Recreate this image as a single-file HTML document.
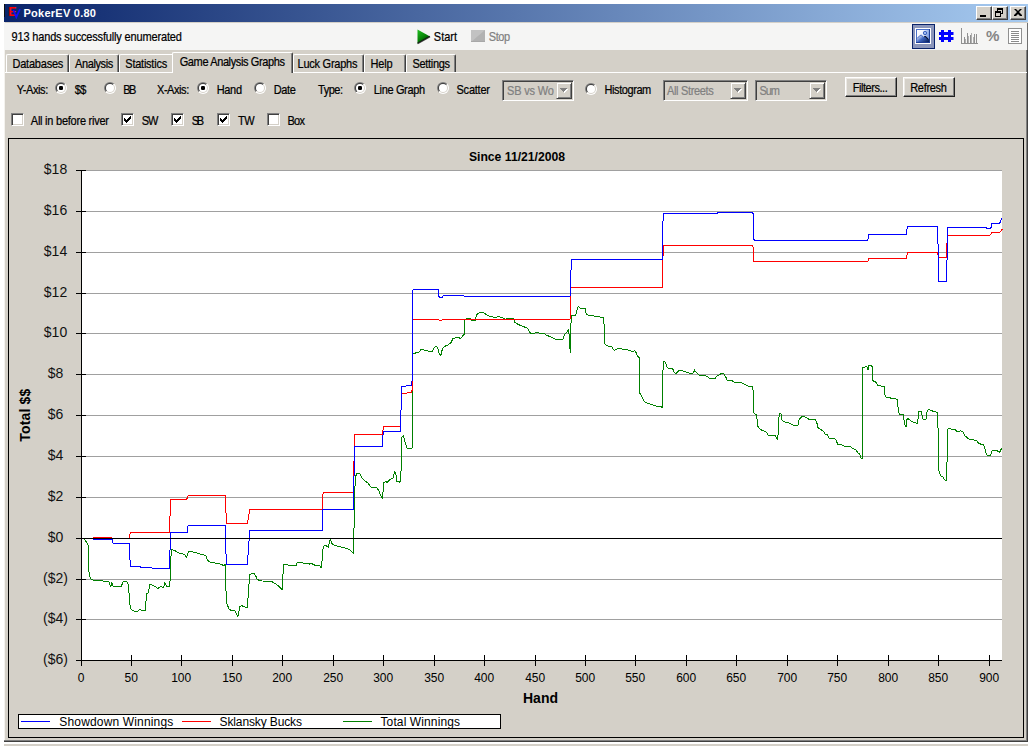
<!DOCTYPE html>
<html><head><meta charset="utf-8"><title>PokerEV 0.80</title>
<style>
html,body{margin:0;padding:0;background:#fff;}
body{width:1032px;height:746px;position:relative;overflow:hidden;font-family:"Liberation Sans",sans-serif;font-size:11px;color:#000;}
#win{position:absolute;left:4px;top:4px;width:1024px;height:738px;background:#d4d0c8;}
#botstrip{position:absolute;left:4px;top:744px;width:1024px;height:2px;background:#d4d0c8;}
#title{position:absolute;left:4px;top:4px;width:1024px;height:18px;background:linear-gradient(to right,#0a246a 0%,#a6caf0 100%);}
#title .t{position:absolute;left:19.5px;top:3px;color:#fff;font-weight:bold;font-size:11px;line-height:13px;white-space:nowrap;letter-spacing:0.25px;}
#tool{position:absolute;left:4px;top:23px;width:1023px;height:27px;background:#f5f5f4;}
.lbl{position:absolute;white-space:nowrap;font-size:11px;line-height:12px;-webkit-text-stroke:0.2px;transform:scaleY(1.12);transform-origin:0 10px;}
.tab{position:absolute;top:54px;height:19px;border-top:1px solid #fff;border-left:1px solid #fff;border-right:1px solid #404040;border-radius:2px 2px 0 0;box-sizing:border-box;box-shadow:inset -1px 0 0 #808080;}
.tab.sel{top:52px;height:21px;background:#d4d0c8;}
.radio{position:absolute;width:12px;height:12px;border-radius:50%;background:linear-gradient(135deg,#808080 0%,#808080 50%,#fff 50%,#fff 100%);}
.radio::before{content:"";position:absolute;left:1px;top:1px;width:10px;height:10px;border-radius:50%;background:linear-gradient(135deg,#404040 0%,#404040 50%,#d4d0c8 50%,#d4d0c8 100%);}
.radio::after{content:"";position:absolute;left:2px;top:2px;width:8px;height:8px;border-radius:50%;background:#fff;}
.radio i{position:absolute;left:4px;top:4px;width:4px;height:4px;border-radius:1.3px;background:#000;z-index:2;}
.cb{position:absolute;width:13px;height:13px;box-sizing:border-box;background:#fff;border:1px solid;border-color:#808080 #fff #fff #808080;box-shadow:inset 1px 1px 0 #404040,inset -1px -1px 0 #d4d0c8;}
.dd{position:absolute;height:21px;box-sizing:border-box;background:#d4d0c8;border:1px solid;border-color:#808080 #fff #fff #808080;box-shadow:inset 1px 1px 0 #404040,inset -1px -1px 0 #d4d0c8;}
.ddb{position:absolute;right:1px;top:1px;width:16px;height:17px;box-sizing:border-box;background:#d4d0c8;border:1px solid;border-color:#d4d0c8 #404040 #404040 #d4d0c8;box-shadow:inset 1px 1px 0 #fff,inset -1px -1px 0 #808080;z-index:0;}
.btn{position:absolute;height:20px;box-sizing:border-box;background:#d4d0c8;border:1px solid;border-color:#fff #202020 #202020 #fff;box-shadow:inset -1px -1px 0 #808080,inset 1px 1px 0 #ece9e4;}
#panel{position:absolute;left:8px;top:138px;width:1016px;height:600px;box-sizing:border-box;border:1px solid #000;background:#d4d0c8;}
#chart{position:absolute;left:0;top:0;font-family:"Liberation Sans",sans-serif;}
.capbtn{position:absolute;top:6px;width:16px;height:14px;box-sizing:border-box;background:#d4d0c8;border:1px solid;border-color:#fff #404040 #404040 #fff;box-shadow:inset -1px -1px 0 #808080;}
</style></head><body>
<div id="win"></div>
<div id="botstrip"></div>
<div style="position:absolute;left:4px;top:22px;width:1px;height:720px;background:#f4f2ee"></div>
<div style="position:absolute;left:1026px;top:50px;width:1px;height:692px;background:#808080"></div>
<div style="position:absolute;left:1027px;top:50px;width:1px;height:692px;background:#404040"></div>
<div style="position:absolute;left:1027px;top:23px;width:1px;height:27px;background:#707070"></div>
<div style="position:absolute;left:4px;top:740px;width:1023px;height:1px;background:#808080"></div>
<div style="position:absolute;left:4px;top:741px;width:1024px;height:1px;background:#404040"></div>
<div id="title"><span class="t">PokerEV 0.80</span></div>
<div id="tool"></div>
<div class="tab" style="left:6px;width:63px"></div>
<div class="tab" style="left:69px;width:50px"></div>
<div class="tab" style="left:119px;width:56px"></div>
<div class="tab" style="left:293px;width:71px"></div>
<div class="tab" style="left:364px;width:42px"></div>
<div class="tab" style="left:406px;width:50px"></div>
<div class="abs" style="position:absolute;left:5px;top:72px;width:1022px;height:1px;background:#fff"></div>
<div class="tab sel" style="left:172px;width:121px"></div>
<div class="btn" style="left:845px;top:77px;width:52px"></div>
<div class="btn" style="left:903px;top:77px;width:52px"></div>

<!-- title icon + caption buttons -->
<div style="position:absolute;left:4px;top:4px;width:1px;height:13px;background:#101010"></div>
<svg style="position:absolute;left:8px;top:6px" width="14" height="13" viewBox="0 0 14 13"><text x="0.3" y="9.6" font-family="Liberation Sans,sans-serif" font-size="12.5" font-weight="bold" fill="#ff0000">E</text><path d="M5.4 4L8.3 11.3L12 3" fill="none" stroke="#1010ff" stroke-width="1.7"/></svg>
<div class="capbtn" style="left:976px"><svg width="16" height="14" viewBox="0 0 16 14" style="position:absolute;left:-1px;top:-1px"><rect x="4" y="9" width="6" height="2" fill="#000"/></svg></div>
<div class="capbtn" style="left:992px"><svg width="16" height="14" viewBox="0 0 16 14" style="position:absolute;left:-1px;top:-1px"><path d="M5 2h6v6h-2v-1h1v-3h-4v1h-1z M3 5h6v6h-6z M4 7v3h4v-3z" fill="#000" fill-rule="evenodd"/></svg></div>
<div class="capbtn" style="left:1010px"><svg width="16" height="14" viewBox="0 0 16 14" style="position:absolute;left:-1px;top:-1px"><path d="M4 3h2l2 2l2-2h2l-3 3l3 3v1h-2l-2-2l-2 2h-2v-1l3-3z" fill="#000"/></svg></div>
<!-- toolbar icons -->
<svg style="position:absolute;left:416px;top:28px" width="16" height="17" viewBox="0 0 16 17"><defs><linearGradient id="gt" x1="0" y1="0" x2="0.6" y2="1"><stop offset="0" stop-color="#22c022"/><stop offset="0.55" stop-color="#0a8a0a"/><stop offset="1" stop-color="#003800"/></linearGradient></defs><path d="M1.5 1.5L14 8.5L1.5 15.5z" fill="url(#gt)"/><path d="M1.5 15.5L14 8.5" stroke="#101010" stroke-width="1.6" fill="none" opacity="0.8"/></svg>
<svg style="position:absolute;left:471px;top:30px" width="14" height="12" viewBox="0 0 14 12"><rect x="0" y="0" width="14" height="12" fill="#c2c2c2"/><path d="M0 12L14 0V12z" fill="#b2b2b2"/><rect x="0" y="11" width="14" height="1" fill="#a8a8a8"/></svg>
<div style="position:absolute;left:912px;top:24px;width:23px;height:25px;box-sizing:border-box;border:1px solid #0a246a;background:#8b96ba"></div>
<svg style="position:absolute;left:915px;top:28px" width="16" height="16" viewBox="0 0 16 16"><defs><linearGradient id="sky" x1="0" y1="0" x2="1" y2="0.3"><stop offset="0" stop-color="#ffffff"/><stop offset="0.55" stop-color="#f0f4ff"/><stop offset="1" stop-color="#7c9ce0"/></linearGradient><linearGradient id="mt" x1="0" y1="0.2" x2="1" y2="0.9"><stop offset="0" stop-color="#e8eefc"/><stop offset="0.45" stop-color="#3c64c0"/><stop offset="1" stop-color="#08205c"/></linearGradient></defs><rect x="0" y="0" width="16" height="16" fill="#fff"/><rect x="1" y="1" width="14" height="14" fill="#1c3c94"/><rect x="1" y="1" width="13" height="13" fill="#4a70c8"/><rect x="2" y="2" width="12" height="12" fill="url(#sky)"/><path d="M2 10.5L5.2 7.3L6.6 7.3L8.6 9.2L9.6 8.5L10.6 8.6L14 12V14H2z" fill="url(#mt)"/><path d="M2 10.5L5.2 7.3L6.6 7.3L9 9.6" stroke="#2c54b4" stroke-width="0.9" fill="none"/><path d="M9.2 8.6L10.5 8.6L13.6 11.6" stroke="#0a1230" stroke-width="1.1" fill="none"/><circle cx="10" cy="5" r="1.7" fill="#9cb8f0" stroke="#3058b8" stroke-width="0.9"/></svg>
<svg style="position:absolute;left:939px;top:30px" width="15" height="13" viewBox="0 0 15 13"><path d="M2 0h3v2h4v-2h3v2h2.5v3h-2.5v2h2.5v3h-2.5v2h-3v-2h-4v2h-3v-2h-2v-3h2v-2h-2v-3h2z M5 5v2h4v-2z" fill="#0000ff" fill-rule="evenodd"/></svg>
<svg style="position:absolute;left:961px;top:28px" width="17" height="16" viewBox="0 0 17 16"><g fill="#909090"><rect x="0" y="0" width="1" height="16"/><rect x="0" y="15" width="17" height="1"/><rect x="3" y="9" width="1" height="6"/><rect x="4" y="11" width="1" height="4" fill="#b0b0b0"/><rect x="6" y="5" width="1" height="10"/><rect x="7" y="8" width="1" height="7" fill="#b0b0b0"/><rect x="9" y="7" width="1" height="8"/><rect x="10" y="5" width="1" height="10" fill="#b0b0b0"/><rect x="12" y="9" width="1" height="6" fill="#b0b0b0"/><rect x="13" y="6" width="1" height="9"/><rect x="15" y="6" width="1" height="9"/></g></svg>
<span style="position:absolute;left:985.5px;top:27.5px;font-family:'Liberation Sans',sans-serif;font-weight:bold;font-size:14px;line-height:16px;color:#868686;transform:scaleX(1.08);transform-origin:0 0">%</span>
<svg style="position:absolute;left:1008px;top:28px" width="14" height="16" viewBox="0 0 14 16"><rect x="0.5" y="0.5" width="13" height="15" fill="#fff" stroke="#909090"/><g fill="#8a8a8a"><rect x="3" y="3" width="8" height="1"/><rect x="3" y="5" width="8" height="1"/><rect x="3" y="7" width="8" height="1"/><rect x="3" y="9" width="8" height="1"/><rect x="3" y="11" width="8" height="1"/><rect x="3" y="13" width="8" height="1"/></g></svg>
<span class="radio" style="left:55px;top:82px"><i></i></span>
<span class="radio" style="left:104px;top:82px"></span>
<span class="radio" style="left:197px;top:82px"><i></i></span>
<span class="radio" style="left:254px;top:82px"></span>
<span class="radio" style="left:354px;top:82px"><i></i></span>
<span class="radio" style="left:437px;top:82px"></span>
<span class="radio" style="left:585px;top:83px"></span>
<span class="cb" style="left:11px;top:113px"></span>
<span class="cb" style="left:121px;top:113px"><svg width="13" height="13" viewBox="0 0 13 13" shape-rendering="crispEdges" style="position:absolute;left:-1px;top:-1px"><path d="M3 5h1v3h-1z M4 6h1v3h-1z M5 7h1v3h-1z M6 6h1v3h-1z M7 5h1v3h-1z M8 4h1v3h-1z M9 3h1v3h-1z" fill="#000"/></svg></span>
<span class="cb" style="left:171px;top:113px"><svg width="13" height="13" viewBox="0 0 13 13" shape-rendering="crispEdges" style="position:absolute;left:-1px;top:-1px"><path d="M3 5h1v3h-1z M4 6h1v3h-1z M5 7h1v3h-1z M6 6h1v3h-1z M7 5h1v3h-1z M8 4h1v3h-1z M9 3h1v3h-1z" fill="#000"/></svg></span>
<span class="cb" style="left:217px;top:113px"><svg width="13" height="13" viewBox="0 0 13 13" shape-rendering="crispEdges" style="position:absolute;left:-1px;top:-1px"><path d="M3 5h1v3h-1z M4 6h1v3h-1z M5 7h1v3h-1z M6 6h1v3h-1z M7 5h1v3h-1z M8 4h1v3h-1z M9 3h1v3h-1z" fill="#000"/></svg></span>
<span class="cb" style="left:267px;top:113px"></span>
<span class="dd" style="left:502px;top:80px;width:72px"><span class="ddb"><svg width="8" height="5" viewBox="0 0 8 5" shape-rendering="crispEdges" style="position:absolute;left:3px;top:5px"><path d="M1 1h7v1h-1v1h-1v1h-1v1h-1v-1h-1v-1h-1v-1h-1z" fill="#fff"/><path d="M0 0h7v1h-1v1h-1v1h-1v1h-1v-1h-1v-1h-1v-1h-1z" fill="#808080"/></svg></span></span>
<span class="dd" style="left:663px;top:80px;width:85px"><span class="ddb"><svg width="8" height="5" viewBox="0 0 8 5" shape-rendering="crispEdges" style="position:absolute;left:3px;top:5px"><path d="M1 1h7v1h-1v1h-1v1h-1v1h-1v-1h-1v-1h-1v-1h-1z" fill="#fff"/><path d="M0 0h7v1h-1v1h-1v1h-1v1h-1v-1h-1v-1h-1v-1h-1z" fill="#808080"/></svg></span></span>
<span class="dd" style="left:755px;top:80px;width:72px"><span class="ddb"><svg width="8" height="5" viewBox="0 0 8 5" shape-rendering="crispEdges" style="position:absolute;left:3px;top:5px"><path d="M1 1h7v1h-1v1h-1v1h-1v1h-1v-1h-1v-1h-1v-1h-1z" fill="#fff"/><path d="M0 0h7v1h-1v1h-1v1h-1v1h-1v-1h-1v-1h-1v-1h-1z" fill="#808080"/></svg></span></span>
<span class="lbl" style="left:11.5px;top:31.0px;letter-spacing:-0.16px;">913 hands successfully enumerated</span>
<span class="lbl" style="left:433.8px;top:31.0px;letter-spacing:0.00px;">Start</span>
<span class="lbl" style="left:488.8px;top:31.0px;letter-spacing:-0.46px;color:#808080;">Stop</span>
<span class="lbl" style="left:12.5px;top:58.0px;letter-spacing:-0.22px;">Databases</span>
<span class="lbl" style="left:75.0px;top:58.0px;letter-spacing:-0.38px;">Analysis</span>
<span class="lbl" style="left:125.3px;top:58.0px;letter-spacing:-0.24px;">Statistics</span>
<span class="lbl" style="left:179.7px;top:56.0px;letter-spacing:-0.38px;">Game Analysis Graphs</span>
<span class="lbl" style="left:297.5px;top:58.0px;letter-spacing:-0.24px;">Luck Graphs</span>
<span class="lbl" style="left:370.5px;top:58.0px;letter-spacing:-0.21px;">Help</span>
<span class="lbl" style="left:412.5px;top:58.0px;letter-spacing:-0.32px;">Settings</span>
<span class="lbl" style="left:16.7px;top:83.5px;letter-spacing:-0.37px;">Y-Axis:</span>
<span class="lbl" style="left:74.7px;top:83.5px;letter-spacing:-0.65px;">$$</span>
<span class="lbl" style="left:123.3px;top:83.5px;letter-spacing:-1.69px;">BB</span>
<span class="lbl" style="left:157.0px;top:83.5px;letter-spacing:-0.44px;">X-Axis:</span>
<span class="lbl" style="left:216.7px;top:83.5px;letter-spacing:-0.33px;">Hand</span>
<span class="lbl" style="left:273.7px;top:83.5px;letter-spacing:-0.38px;">Date</span>
<span class="lbl" style="left:318.0px;top:83.5px;letter-spacing:-0.48px;">Type:</span>
<span class="lbl" style="left:373.8px;top:83.5px;letter-spacing:-0.35px;">Line Graph</span>
<span class="lbl" style="left:456.5px;top:83.5px;letter-spacing:-0.23px;">Scatter</span>
<span class="lbl" style="left:507.0px;top:85.0px;letter-spacing:-0.19px;color:#808080;">SB vs Wo</span>
<span class="lbl" style="left:604.5px;top:83.5px;letter-spacing:-0.42px;">Histogram</span>
<span class="lbl" style="left:667.0px;top:85.0px;letter-spacing:-0.34px;color:#808080;">All Streets</span>
<span class="lbl" style="left:759.5px;top:85.0px;letter-spacing:-1.06px;color:#808080;">Sum</span>
<span class="lbl" style="left:852.8px;top:81.5px;letter-spacing:-0.46px;">Filters...</span>
<span class="lbl" style="left:910.2px;top:81.5px;letter-spacing:-0.30px;">Refresh</span>
<span class="lbl" style="left:30.8px;top:115.0px;letter-spacing:-0.24px;">All in before river</span>
<span class="lbl" style="left:141.7px;top:115.0px;letter-spacing:-1.13px;">SW</span>
<span class="lbl" style="left:191.7px;top:115.0px;letter-spacing:-2.19px;">SB</span>
<span class="lbl" style="left:238.0px;top:115.0px;letter-spacing:-0.41px;">TW</span>
<span class="lbl" style="left:287.5px;top:115.0px;letter-spacing:-0.73px;">Box</span>
<div id="panel"></div>
<svg id="chart" width="1032" height="746" viewBox="0 0 1032 746">
<rect x="82" y="170" width="920" height="490" fill="#fff"/>
<rect x="82" y="619" width="920" height="1" fill="#a0a0a0"/>
<rect x="82" y="579" width="920" height="1" fill="#a0a0a0"/>
<rect x="82" y="497" width="920" height="1" fill="#a0a0a0"/>
<rect x="82" y="456" width="920" height="1" fill="#a0a0a0"/>
<rect x="82" y="415" width="920" height="1" fill="#a0a0a0"/>
<rect x="82" y="374" width="920" height="1" fill="#a0a0a0"/>
<rect x="82" y="333" width="920" height="1" fill="#a0a0a0"/>
<rect x="82" y="293" width="920" height="1" fill="#a0a0a0"/>
<rect x="82" y="252" width="920" height="1" fill="#a0a0a0"/>
<rect x="82" y="211" width="920" height="1" fill="#a0a0a0"/>
<rect x="82" y="170" width="920" height="1" fill="#a0a0a0"/>
<polyline fill="none" stroke="#008000" stroke-width="1" stroke-linejoin="round" shape-rendering="crispEdges" points="84.0,538.3 88.0,544.4 88.4,568.5 89.5,574.5 90.5,578.6 93.1,580.0 100.1,580.6 106.2,581.6 109.2,582.0 110.6,587.0 111.8,582.6 113.2,586.2 121.2,586.2 123.3,581.6 126.7,581.6 128.3,584.6 129.3,596.7 130.3,608.7 133.3,610.8 137.3,611.8 139.3,609.8 145.4,610.8 146.0,600.7 146.8,593.7 148.4,592.7 149.8,584.6 152.4,585.0 155.4,586.6 157.5,588.6 160.5,586.6 163.5,587.6 164.9,582.6 166.5,586.6 169.1,586.6 170.1,580.6 170.7,560.5 171.5,549.4 174.5,550.4 178.6,552.8 184.6,554.4 186.6,557.5 188.6,551.4 195.7,552.4 200.7,554.4 205.7,555.4 207.7,560.5 210.8,562.5 218.8,563.5 223.8,565.5 225.2,564.5 225.8,588.6 226.9,603.7 229.3,609.8 234.9,610.8 237.9,616.8 239.9,606.7 241.9,605.7 244.0,606.7 247.4,607.7 248.6,588.6 250.0,574.5 252.0,573.5 254.1,573.5 256.1,576.6 257.1,579.6 262.1,581.0 271.2,581.2 274.2,583.0 278.2,585.6 281.2,588.6 282.2,589.6 282.8,576.6 283.9,564.5 288.3,565.1 296.3,565.5 297.3,562.5 304.4,563.1 309.4,564.1 311.4,563.1 313.4,564.9 319.5,565.5 321.1,567.5 322.1,560.5 323.1,547.4 324.5,545.4 326.5,546.0 328.5,547.4 329.5,541.4 330.5,538.9 331.5,543.4 334.5,545.4 340.6,547.0 346.6,548.4 350.6,550.4 353.1,553.4 353.7,538.3 354.3,518.2 354.3,510.7 354.7,490.6 355.7,476.5 356.7,473.5 359.7,473.1 361.7,477.5 364.7,480.5 367.7,482.9 370.8,487.0 376.8,487.6 378.8,490.6 380.8,495.6 382.2,498.6 383.2,490.6 383.8,482.5 385.8,481.5 386.9,482.5 389.9,479.5 392.9,478.5 394.5,471.5 395.9,474.5 396.9,481.5 399.9,482.1 400.9,476.5 401.5,450.4 401.9,437.3 403.6,435.9 405.0,442.3 407.0,448.3 412.0,448.7 412.5,419.9 412.5,354.1 415.1,353.1 419.1,352.1 421.1,349.5 424.1,350.1 428.2,351.1 432.2,351.5 434.2,347.5 436.2,346.0 437.8,347.5 438.6,352.5 440.2,355.5 441.2,354.5 442.2,349.5 444.3,346.4 447.3,345.4 451.3,342.4 452.7,338.8 455.3,338.0 457.3,337.0 460.4,338.4 462.4,336.4 464.4,334.0 465.0,320.3 466.0,318.9 470.4,318.9 471.4,320.3 475.4,320.3 476.4,314.7 479.5,312.8 482.5,312.2 486.5,314.7 490.5,316.7 494.5,317.3 499.6,316.7 503.6,318.3 505.6,319.3 508.6,318.3 513.7,318.7 515.1,322.7 518.7,324.7 522.7,326.3 527.7,328.3 529.8,332.4 530.8,333.4 536.8,332.8 543.8,333.4 546.9,335.4 551.9,337.4 555.9,339.4 562.9,339.4 564.6,334.4 567.0,332.4 568.6,329.3 569.4,338.4 570.2,352.5 570.6,330.4 571.4,316.3 571.5,315.7 574.1,315.1 575.7,315.7 577.1,309.7 578.1,306.4 580.1,308.0 585.1,308.4 586.2,313.7 588.2,315.1 592.2,315.7 597.2,316.7 603.3,317.5 604.3,326.2 604.7,343.9 607.3,345.9 611.9,346.7 613.3,349.3 614.7,350.3 617.3,348.9 618.7,348.3 620.4,348.9 626.4,349.3 629.4,350.7 633.4,351.3 634.8,350.3 636.4,353.3 637.5,356.3 639.1,357.3 639.7,376.4 639.9,393.5 641.5,395.6 642.9,398.6 644.5,401.6 648.5,403.6 651.5,404.6 656.6,406.2 661.6,407.0 662.6,407.6 663.0,370.4 663.6,361.4 665.6,362.4 667.2,367.4 668.6,368.4 672.7,368.8 674.3,372.4 675.7,373.8 678.7,370.8 680.7,370.4 685.7,372.0 690.8,373.4 693.8,372.8 694.4,369.4 695.2,371.4 697.8,373.4 699.2,375.4 704.8,375.4 706.9,376.4 709.9,378.5 714.9,378.9 716.9,376.0 720.9,373.8 724.0,374.0 726.0,377.5 727.0,380.1 732.0,380.5 734.1,382.2 741.1,382.6 744.1,383.9 748.2,386.3 752.2,386.9 753.2,390.3 753.6,412.4 754.6,414.0 756.8,414.8 757.4,425.5 759.2,428.5 762.2,430.5 766.7,432.1 768.3,435.2 775.3,435.2 776.7,439.0 777.9,439.0 778.5,419.5 779.5,414.0 781.0,413.6 781.8,419.5 783.4,421.5 788.4,422.9 793.4,425.1 798.1,425.1 799.1,419.5 801.5,417.0 803.5,416.4 806.5,417.5 808.5,419.1 815.6,419.5 817.0,423.5 818.0,427.5 820.6,429.5 823.6,431.5 825.0,434.1 827.6,435.0 829.0,438.2 834.7,438.6 836.3,440.6 837.7,444.2 841.7,444.6 844.3,446.2 850.4,446.6 852.8,448.6 855.8,449.6 857.8,452.7 859.8,454.3 861.4,458.7 862.2,458.7 862.6,400.4 862.8,367.2 866.9,366.8 867.9,370.2 868.9,365.7 870.5,365.3 872.3,366.6 872.5,380.2 873.9,381.2 875.9,382.2 877.9,385.3 880.9,385.9 884.4,386.9 885.0,395.3 886.0,397.3 890.0,397.7 892.0,398.7 895.2,398.7 897.2,399.3 898.2,408.4 899.2,414.0 903.3,414.4 904.3,422.5 905.3,426.5 906.3,426.1 906.9,419.5 907.9,418.5 910.3,420.5 913.3,422.1 916.3,423.1 917.7,423.5 918.3,415.4 918.9,411.4 921.4,411.4 922.4,417.5 923.0,419.1 926.0,419.1 927.0,412.4 928.4,409.4 930.4,410.0 933.4,411.4 937.5,412.4 938.1,430.5 938.9,470.8 940.5,475.8 942.9,476.8 944.5,479.8 946.1,481.2 946.9,465.7 947.5,444.6 947.9,428.9 954.5,429.1 956.6,431.1 959.0,431.5 960.6,430.9 963.0,432.1 964.6,435.6 966.6,437.0 968.6,439.0 972.7,439.8 976.7,440.6 978.7,443.6 983.1,444.6 984.7,447.6 985.7,452.7 987.1,455.3 990.8,455.3 991.8,451.0 993.8,450.2 996.8,450.6 999.8,452.1 1000.8,449.6 1002.2,448.6"/>
<polyline fill="none" stroke="#ff0000" stroke-width="1" stroke-linejoin="round" shape-rendering="crispEdges" points="93.1,537.9 112.2,537.9 112.6,538.3 129.3,538.3 130.3,532.7 169.5,532.7 170.5,499.5 186.6,499.5 188.2,495.5 225.2,495.5 226.5,523.3 247.4,523.3 248.6,516.2 250.0,509.6 252.0,509.6 322.1,509.7 323.1,492.6 353.7,492.6 354.3,434.3 382.4,434.3 383.4,426.8 400.5,426.8 401.5,393.6 412.0,392.4 412.5,319.5 438.2,319.5 439.2,320.1 442.2,320.1 443.3,319.5 570.0,319.5 571.0,287.1 571.5,287.5 662.6,287.5 662.8,259.3 663.6,245.9 732.0,245.9 752.2,245.4 753.4,247.4 753.6,261.5 867.9,261.5 868.9,258.5 892.0,258.1 906.3,258.4 907.5,252.8 937.5,252.8 938.9,257.4 946.1,257.4 946.5,250.4 947.5,235.9 989.8,235.5 991.8,232.6 999.8,232.2 1002.2,229.2"/>
<polyline fill="none" stroke="#0000ff" stroke-width="1" stroke-linejoin="round" shape-rendering="crispEdges" points="93.1,539.5 112.2,539.5 113.2,543.4 129.3,543.4 130.3,566.5 140.4,566.5 141.0,567.5 151.4,567.5 152.4,568.5 169.5,568.5 170.5,532.7 187.0,532.7 188.0,525.9 225.2,525.9 226.3,564.5 247.4,564.5 248.6,545.4 250.0,530.3 252.0,530.3 322.1,530.4 322.9,509.7 353.7,509.7 354.3,446.3 382.4,446.3 383.2,431.6 400.5,431.6 401.6,386.3 411.1,385.7 412.1,380.6 412.5,290.1 413.7,289.5 438.2,289.5 438.8,296.2 440.2,297.6 442.2,297.2 443.3,295.5 463.4,295.5 464.4,296.4 570.0,296.4 570.6,270.0 570.7,276.4 571.5,259.3 662.2,259.3 662.6,226.2 663.6,213.5 716.9,213.5 717.9,212.5 732.0,212.5 752.2,212.2 753.6,214.2 753.8,239.3 754.6,240.4 867.9,240.4 868.5,234.7 892.0,234.3 906.3,234.7 907.3,226.6 937.5,226.6 938.1,246.3 938.5,281.5 946.5,281.5 946.9,267.5 947.5,227.2 985.7,227.2 986.7,228.6 990.8,228.6 991.8,223.6 999.8,223.2 1000.8,220.2 1002.2,217.8"/>
<rect x="82" y="538" width="920" height="1" fill="#000"/>
<rect x="81" y="170" width="1" height="491" fill="#000"/>
<rect x="81" y="660" width="921" height="1" fill="#000"/>
<rect x="76" y="660" width="10" height="1" fill="#000"/>
<text x="55.5" y="664.4" text-anchor="middle" font-size="14" fill="#111">($6)</text>
<rect x="76" y="619" width="10" height="1" fill="#000"/>
<text x="55.5" y="623.4" text-anchor="middle" font-size="14" fill="#111">($4)</text>
<rect x="76" y="579" width="10" height="1" fill="#000"/>
<text x="55.5" y="583.4" text-anchor="middle" font-size="14" fill="#111">($2)</text>
<rect x="76" y="538" width="10" height="1" fill="#000"/>
<text x="55.5" y="542.4" text-anchor="middle" font-size="14" fill="#111">$0</text>
<rect x="76" y="497" width="10" height="1" fill="#000"/>
<text x="55.5" y="501.4" text-anchor="middle" font-size="14" fill="#111">$2</text>
<rect x="76" y="456" width="10" height="1" fill="#000"/>
<text x="55.5" y="460.4" text-anchor="middle" font-size="14" fill="#111">$4</text>
<rect x="76" y="415" width="10" height="1" fill="#000"/>
<text x="55.5" y="419.4" text-anchor="middle" font-size="14" fill="#111">$6</text>
<rect x="76" y="374" width="10" height="1" fill="#000"/>
<text x="55.5" y="378.4" text-anchor="middle" font-size="14" fill="#111">$8</text>
<rect x="76" y="333" width="10" height="1" fill="#000"/>
<text x="55.5" y="337.4" text-anchor="middle" font-size="14" fill="#111">$10</text>
<rect x="76" y="293" width="10" height="1" fill="#000"/>
<text x="55.5" y="297.4" text-anchor="middle" font-size="14" fill="#111">$12</text>
<rect x="76" y="252" width="10" height="1" fill="#000"/>
<text x="55.5" y="256.4" text-anchor="middle" font-size="14" fill="#111">$14</text>
<rect x="76" y="211" width="10" height="1" fill="#000"/>
<text x="55.5" y="215.4" text-anchor="middle" font-size="14" fill="#111">$16</text>
<rect x="76" y="170" width="10" height="1" fill="#000"/>
<text x="55.5" y="174.4" text-anchor="middle" font-size="14" fill="#111">$18</text>
<rect x="81" y="655" width="1" height="11" fill="#000"/>
<text x="81.2" y="681.7" text-anchor="middle" font-size="12" letter-spacing="0" fill="#000">0</text>
<rect x="131" y="655" width="1" height="11" fill="#000"/>
<text x="131.2" y="681.7" text-anchor="middle" font-size="12" letter-spacing="0" fill="#000">50</text>
<rect x="181" y="655" width="1" height="11" fill="#000"/>
<text x="181.2" y="681.7" text-anchor="middle" font-size="12" letter-spacing="0" fill="#000">100</text>
<rect x="232" y="655" width="1" height="11" fill="#000"/>
<text x="232.2" y="681.7" text-anchor="middle" font-size="12" letter-spacing="0" fill="#000">150</text>
<rect x="282" y="655" width="1" height="11" fill="#000"/>
<text x="282.2" y="681.7" text-anchor="middle" font-size="12" letter-spacing="0" fill="#000">200</text>
<rect x="333" y="655" width="1" height="11" fill="#000"/>
<text x="333.2" y="681.7" text-anchor="middle" font-size="12" letter-spacing="0" fill="#000">250</text>
<rect x="383" y="655" width="1" height="11" fill="#000"/>
<text x="383.2" y="681.7" text-anchor="middle" font-size="12" letter-spacing="0" fill="#000">300</text>
<rect x="434" y="655" width="1" height="11" fill="#000"/>
<text x="434.2" y="681.7" text-anchor="middle" font-size="12" letter-spacing="0" fill="#000">350</text>
<rect x="484" y="655" width="1" height="11" fill="#000"/>
<text x="484.2" y="681.7" text-anchor="middle" font-size="12" letter-spacing="0" fill="#000">400</text>
<rect x="535" y="655" width="1" height="11" fill="#000"/>
<text x="535.2" y="681.7" text-anchor="middle" font-size="12" letter-spacing="0" fill="#000">450</text>
<rect x="585" y="655" width="1" height="11" fill="#000"/>
<text x="585.2" y="681.7" text-anchor="middle" font-size="12" letter-spacing="0" fill="#000">500</text>
<rect x="635" y="655" width="1" height="11" fill="#000"/>
<text x="635.2" y="681.7" text-anchor="middle" font-size="12" letter-spacing="0" fill="#000">550</text>
<rect x="686" y="655" width="1" height="11" fill="#000"/>
<text x="686.2" y="681.7" text-anchor="middle" font-size="12" letter-spacing="0" fill="#000">600</text>
<rect x="736" y="655" width="1" height="11" fill="#000"/>
<text x="736.2" y="681.7" text-anchor="middle" font-size="12" letter-spacing="0" fill="#000">650</text>
<rect x="787" y="655" width="1" height="11" fill="#000"/>
<text x="787.2" y="681.7" text-anchor="middle" font-size="12" letter-spacing="0" fill="#000">700</text>
<rect x="837" y="655" width="1" height="11" fill="#000"/>
<text x="837.2" y="681.7" text-anchor="middle" font-size="12" letter-spacing="0" fill="#000">750</text>
<rect x="888" y="655" width="1" height="11" fill="#000"/>
<text x="888.2" y="681.7" text-anchor="middle" font-size="12" letter-spacing="0" fill="#000">800</text>
<rect x="938" y="655" width="1" height="11" fill="#000"/>
<text x="938.2" y="681.7" text-anchor="middle" font-size="12" letter-spacing="0" fill="#000">850</text>
<rect x="989" y="655" width="1" height="11" fill="#000"/>
<text x="989.2" y="681.7" text-anchor="middle" font-size="12" letter-spacing="0" fill="#000">900</text>
<text x="517" y="161" text-anchor="middle" font-size="12.2" font-weight="bold">Since 11/21/2008</text>
<text x="540.5" y="702.5" text-anchor="middle" font-size="14" font-weight="bold">Hand</text>
<text transform="translate(30,415.2) rotate(-90)" text-anchor="middle" font-size="14" font-weight="bold" textLength="53" lengthAdjust="spacing">Total $$</text>
<rect x="18.5" y="714.5" width="482" height="14" fill="#fff" stroke="#000" stroke-width="1"/>
<rect x="21" y="721" width="29" height="1" fill="#0000ff"/>
<text x="59.3" y="725.7" font-size="12" textLength="114" lengthAdjust="spacing">Showdown Winnings</text>
<rect x="182" y="721" width="29" height="1" fill="#ff0000"/>
<text x="219.5" y="725.7" font-size="12" textLength="82.5" lengthAdjust="spacing">Sklansky Bucks</text>
<rect x="343" y="721" width="29" height="1" fill="#008000"/>
<text x="380.5" y="725.7" font-size="12" textLength="79.5" lengthAdjust="spacing">Total Winnings</text>
</svg>
</body></html>
